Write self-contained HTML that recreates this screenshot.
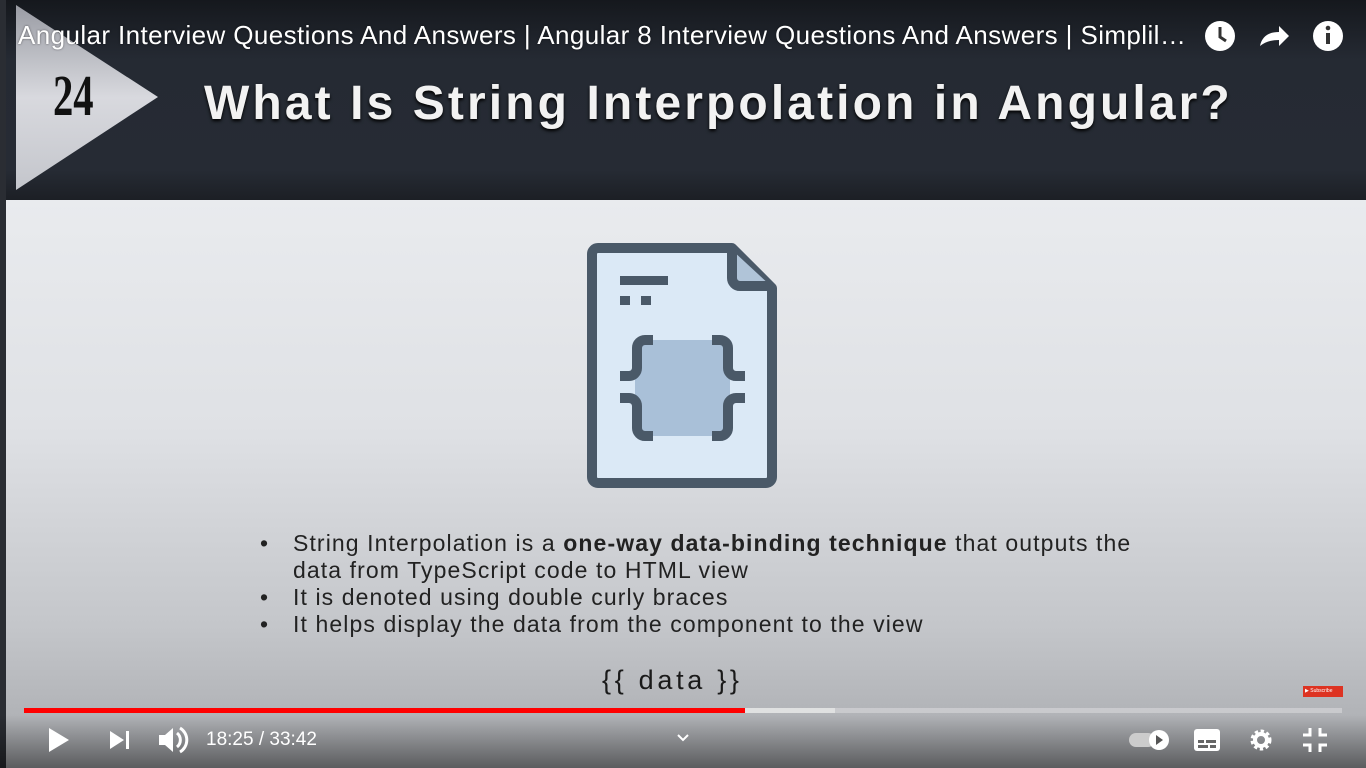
<!DOCTYPE html>
<html><head><style>
*{margin:0;padding:0;box-sizing:border-box}
body{width:1366px;height:768px;overflow:hidden;position:relative;font-family:"Liberation Sans",sans-serif;background:#d6d8dc}
.hdr{position:absolute;left:0;top:0;width:1366px;height:200px;background:linear-gradient(#15181d,#252a33 30%,#262b34 85%,#1c1f25)}
.slide{position:absolute;left:0;top:200px;width:1366px;height:568px;background:linear-gradient(#e9ebee,#dfe1e5 40%,#c4c6ca 75%,#a6a8ac)}
.edge{position:absolute;left:0;top:0;width:6px;height:768px;background:#2a2d33}
.title{position:absolute;left:18px;top:20px;color:#fff;font-size:26px;letter-spacing:.4px;white-space:nowrap;text-shadow:0 0 2px rgba(0,0,0,.5)}
.h1{position:absolute;left:204px;top:76px;color:#f2f2f2;font-size:48px;font-weight:bold;letter-spacing:3.1px;text-shadow:0 2px 3px #000}
.num{position:absolute;left:53px;top:62px;font-family:"Liberation Serif",serif;font-size:58px;font-weight:bold;color:#111;transform:scaleX(.7);transform-origin:left}
.txt{position:absolute;left:260px;top:530px;color:#222;font-size:23px;line-height:27px;letter-spacing:1.1px;white-space:nowrap}
.txt div{position:relative;padding-left:33px}
.txt div.b:before{content:"•";position:absolute;left:0}
.data{position:absolute;left:602px;top:665px;font-size:27px;color:#1a1a1a;letter-spacing:3.7px}
.bar{position:absolute;top:708px;height:5px}
.ctl{position:absolute;left:0;top:715px;width:1366px;height:53px;background:linear-gradient(rgba(0,0,0,0),rgba(0,0,0,.45))}
.time{position:absolute;left:206px;top:729px;color:#fff;font-size:19px}
</style></head><body>
<div class="hdr"></div>
<div class="slide"></div>
<svg style="position:absolute;left:0;top:0" width="170" height="200">
<defs><linearGradient id="g" x1="0" y1="0" x2="0" y2="1"><stop offset="0" stop-color="#9a9ca4"/><stop offset=".5" stop-color="#d8d9de"/><stop offset="1" stop-color="#c4c6cc"/></linearGradient></defs>
<polygon points="16,5 158,97 16,190" fill="url(#g)"/>
</svg>
<div class="num">24</div>
<div class="edge"></div>
<div class="title">Angular Interview Questions And Answers | Angular 8 Interview Questions And Answers | Simplil…</div>
<div class="h1">What Is String Interpolation in Angular?</div>
<svg style="position:absolute;left:585px;top:240px" width="200" height="255">
<path d="M14,8 H148 L188,48 V237 a6,6 0 0 1 -6,6 H14 a6,6 0 0 1 -6,-6 V14 a6,6 0 0 1 6,-6Z" transform="translate(-1,0)" fill="#dbe9f6" stroke="#4a5968" stroke-width="10" stroke-linejoin="round"/>
<path d="M147,10 V38 a8,8 0 0 0 8,8 H186" fill="#b0c4d8" stroke="#4a5968" stroke-width="10"/>
<rect x="35" y="36" width="48" height="9" fill="#4a5968"/>
<rect x="35" y="56" width="10" height="9" fill="#4a5968"/>
<rect x="56" y="56" width="10" height="9" fill="#4a5968"/>
<rect x="50" y="100" width="95" height="96" fill="#a9c0d8"/>
<path d="M68,100 H60 a8,8 0 0 0 -8,8 V128 a8,8 0 0 1 -8,8 H35 M35,158 H44 a8,8 0 0 1 8,8 V188 a8,8 0 0 0 8,8 H68" fill="none" stroke="#4a5968" stroke-width="10"/>
<path d="M127,100 H135 a8,8 0 0 1 8,8 V128 a8,8 0 0 0 8,8 H160 M160,158 H151 a8,8 0 0 0 -8,8 V188 a8,8 0 0 1 -8,8 H127" fill="none" stroke="#4a5968" stroke-width="10"/>
</svg>
<div class="txt">
<div class="b">String Interpolation is a <b>one-way data-binding technique</b> that outputs the</div>
<div>data from TypeScript code to HTML view</div>
<div class="b">It is denoted using double curly braces</div>
<div class="b">It helps display the data from the component to the view</div>
</div>
<div class="data">{{ data }}</div>
<div style="position:absolute;left:1303px;top:686px;width:40px;height:11px;background:#d32;font-size:5px;color:#fff;padding:2px">▶ Subscribe</div>
<div class="ctl"></div>
<div class="bar" style="left:24px;width:1318px;background:rgba(255,255,255,.3)"></div>
<div class="bar" style="left:745px;width:90px;background:rgba(230,230,230,.8)"></div>
<div class="bar" style="left:24px;width:721px;background:#f00"></div>
<div class="time">18:25 / 33:42</div>
<svg style="position:absolute;left:0;top:720px" width="1366" height="40" fill="#fff">
<polygon points="49,8 69,20 49,32"/>
<polygon points="110,11 124,20 110,29"/><rect x="126" y="11" width="3" height="18"/>
<path d="M159,15 h6 l8,-7 v24 l-8,-7 h-6z"/><path d="M177,13 a9,9 0 0 1 0,14 M180,8 a14,14 0 0 1 0,24" stroke="#fff" stroke-width="3" fill="none"/>
<path d="M678,15 l5,5 l5,-5" stroke="#fff" stroke-width="2" fill="none"/>
<rect x="1129" y="13" width="26" height="14" rx="7" fill="#ccc"/><circle cx="1159" cy="20" r="10"/><polygon points="1156,15 1163,20 1156,25" fill="#555"/>
<rect x="1194" y="9" width="26" height="22" rx="3"/><rect x="1198" y="20" width="6" height="3" fill="#666"/><rect x="1206" y="20" width="10" height="3" fill="#666"/><rect x="1198" y="25" width="10" height="3" fill="#666"/><rect x="1210" y="25" width="6" height="3" fill="#666"/>
<circle cx="1261" cy="20" r="8" fill="none" stroke="#fff" stroke-width="5" stroke-dasharray="3 2.3"/><circle cx="1261" cy="20" r="6" fill="none" stroke="#fff" stroke-width="4"/>
<path d="M1310,8 v7 h-7 M1320,8 v7 h7 M1303,25 h7 v7 M1327,25 h-7 v7" stroke="#fff" stroke-width="3" fill="none"/>
</svg>
<svg style="position:absolute;left:1200px;top:18px" width="150" height="36" fill="#fff">
<circle cx="20" cy="18" r="15"/><path d="M20,9 v10 l6,4" stroke="#333" stroke-width="3" fill="none"/>
<path d="M60,28 c2,-10 9,-14 19,-14 v-6 l10,10 l-10,10 v-6 c-8,0 -14,2 -19,6z"/>
<circle cx="128" cy="18" r="15"/><rect x="126" y="15" width="4" height="11" fill="#333"/><circle cx="128" cy="10" r="2.3" fill="#333"/>
</svg>
</body></html>
